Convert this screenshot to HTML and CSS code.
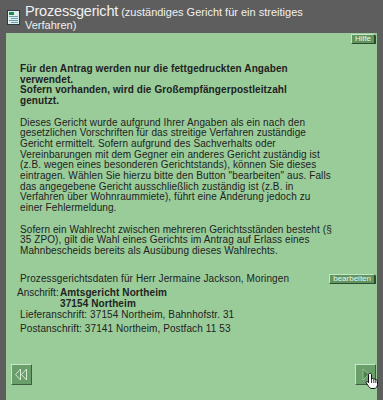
FILE: index.html
```html
<!DOCTYPE html>
<html lang="de">
<head>
    <meta charset="UTF-8">
    <meta name="viewport" content="width=device-width, initial-scale=1.0">
    <title>Prozessgericht</title>
    <link rel="stylesheet" href="styles.css">
</head>
<body>

    <div class="kopf">
        <svg class="kopf-icon" width="13" height="15" viewBox="0 0 13 15">
            <rect x="0.5" y="0.5" width="12" height="14" fill="#dcefee" stroke="#2b3a3a"/>
            <rect x="2" y="2" width="5" height="3" fill="#1f8a4a"/>
            <rect x="2" y="6" width="9" height="1" fill="#6b9ea6"/>
            <rect x="4" y="8" width="7" height="1" fill="#6b9ea6"/>
            <rect x="2" y="10" width="9" height="1" fill="#6b9ea6"/>
            <rect x="4" y="12" width="7" height="1" fill="#6b9ea6"/>
        </svg>
        <h1 class="titel">
            <span class="haupt">Prozessgericht</span>
            <span class="zusatz">(zuständiges Gericht für ein streitiges</span><br>
            <span class="zusatz">Verfahren)</span>
        </h1>
    </div>

    <div class="panel">
        <div class="leiste">
            <a class="knopf">Hilfe</a>
        </div>

        <div class="inhalt">
            <p class="hinweis">Für den Antrag werden nur die fettgedruckten Angaben verwendet.<br>Sofern vorhanden, wird die Großempfängerpostleitzahl genutzt.</p>

            <p>Dieses Gericht wurde aufgrund Ihrer Angaben als ein nach den gesetzlichen Vorschriften für das streitige Verfahren zuständige Gericht ermittelt. Sofern aufgrund des Sachverhalts oder Vereinbarungen mit dem Gegner ein anderes Gericht zuständig ist (z.B. wegen eines besonderen Gerichtstands), können Sie dieses eintragen. Wählen Sie hierzu bitte den Button "bearbeiten" aus. Falls das angegebene Gericht ausschließlich zuständig ist (z.B. in Verfahren über Wohnraummiete), führt eine Änderung jedoch zu einer Fehlermeldung.</p>

            <p>Sofern ein Wahlrecht zwischen mehreren Gerichtsständen besteht (§ 35 ZPO), gilt die Wahl eines Gerichts im Antrag auf Erlass eines Mahnbescheids bereits als Ausübung dieses Wahlrechts.</p>

            <div class="daten-kopf">
                <span>Prozessgerichtsdaten für Herr Jermaine Jackson, Moringen</span>
                <a class="knopf">bearbeiten</a>
            </div>

            <div class="anschrift">
                <span class="label">Anschrift:</span>
                <span class="fett">Amtsgericht Northeim<br>37154 Northeim</span>
            </div>
            <div class="zeile">Lieferanschrift: 37154 Northeim, Bahnhofstr. 31</div>
            <div class="zeile">Postanschrift: 37141 Northeim, Postfach 11 53</div>
        </div>

        <div class="navi">
            <a class="nav-knopf">
                <svg width="21" height="21" viewBox="0 0 21 21">
                    <polygon points="9.5,5 4.5,10.5 9.5,16" fill="none" stroke="#d4ecd4" stroke-width="1"/>
                    <polygon points="15.5,5 10.5,10.5 15.5,16" fill="none" stroke="#d4ecd4" stroke-width="1"/>
                </svg>
            </a>
            <a class="nav-knopf weiter">
                <svg width="21" height="21" viewBox="0 0 21 21">
                    <polygon points="8,5 14,10.5 8,16" fill="#4f804f" stroke="#8fc08f" stroke-width="1"/>
                </svg>
                <svg class="zeiger" width="14" height="18" viewBox="0 0 14 18">
                    <path d="M4.5 1.5 C5.5 1 6.5 1.5 6.5 2.5 V7 C7 6.3 8.5 6.3 8.8 7.3 C9.3 6.7 10.6 6.9 10.8 7.9 C11.4 7.5 12.5 7.8 12.5 9 V12.5 C12.5 14.5 11.3 16.5 9 16.5 H7 C5.5 16.5 4.6 15.8 3.8 14.7 L1.2 10.8 C0.7 10 1.6 9 2.5 9.7 L3.5 10.7 V2.5 C3.5 2 4 1.6 4.5 1.5 Z" fill="#ffffff" stroke="#111111" stroke-width="1"/>
                    <path d="M6.5 7 V11 M8.8 7.3 V11 M10.8 7.9 V11" stroke="#111111" stroke-width="0.8" fill="none"/>
                </svg>
            </a>
        </div>
    </div>

</body>
</html>
```

FILE: styles.css
```css
body {
    font-family: 'Liberation Sans', Arial, sans-serif;
    margin: 0;
    padding: 0;
    background-color: #5e5e5e;
    height: 100vh;
    overflow: hidden;
    display: flex;
    flex-direction: column;
}

.kopf {
    display: flex;
    align-items: flex-start;
    height: 33px;
    padding-left: 7px;
    box-sizing: border-box;
}

.kopf-icon {
    margin-top: 10px;
    flex: none;
}

.titel {
    margin: 5px 0 0 5px;
    font-size: 11px;
    font-weight: normal;
    line-height: 12.5px;
    color: #f0f0f0;
}

.haupt {
    font-size: 14.5px;
    letter-spacing: -0.2px;
}

.panel {
    flex: 1;
    margin: 0 6px;
    background-color: #99cc99;
    display: flex;
    flex-direction: column;
    font-size: 10px;
    line-height: 10.7px;
    letter-spacing: 0.1px;
    color: #222;
}

.leiste {
    display: flex;
    justify-content: flex-end;
    padding: 1px 1px 0 0;
}

.knopf {
    display: inline-block;
    background-color: #5f955f;
    color: #eef6ee;
    font-size: 8px;
    line-height: 8px;
    letter-spacing: 0;
    padding: 0 3px;
    border-top: 1px solid #c6e4c6;
    border-left: 1px solid #c6e4c6;
    border-right: 2px solid #2f4a2f;
    border-bottom: 1px solid #2f4a2f;
    border-top-right-radius: 3px;
}

.inhalt {
    padding: 0 0 0 14px;
}

.inhalt p {
    margin: 0 0 10.7px 0;
    width: 312px;
}

.inhalt .hinweis {
    margin-top: 20px;
    width: 300px;
    font-weight: bold;
}

.daten-kopf {
    display: flex;
    justify-content: space-between;
    align-items: center;
    margin-top: 17px;
    padding-right: 1px;
}

.anschrift {
    display: flex;
    margin: 4px 0 0 -3px;
}

.anschrift .label {
    width: 43px;
    letter-spacing: 0;
}

.fett {
    font-weight: bold;
}

.zeile {
    line-height: 10.7px;
}

.zeile + .zeile {
    margin-top: 4px;
}

.navi {
    margin-top: auto;
    display: flex;
    justify-content: space-between;
    padding: 0 1px 15px 5px;
}

.nav-knopf {
    position: relative;
    display: block;
    width: 21px;
    height: 21px;
    box-sizing: border-box;
    background-color: #6a9e6a;
    border-top: 1px solid #c8e6c8;
    border-left: 1px solid #c8e6c8;
    border-right: 1px solid #3d5e3d;
    border-bottom: 1px solid #3d5e3d;
}

.nav-knopf svg {
    display: block;
    margin: -1px;
}

.nav-knopf .zeiger {
    position: absolute;
    left: 9px;
    top: 7px;
    margin: 0;
}
```
